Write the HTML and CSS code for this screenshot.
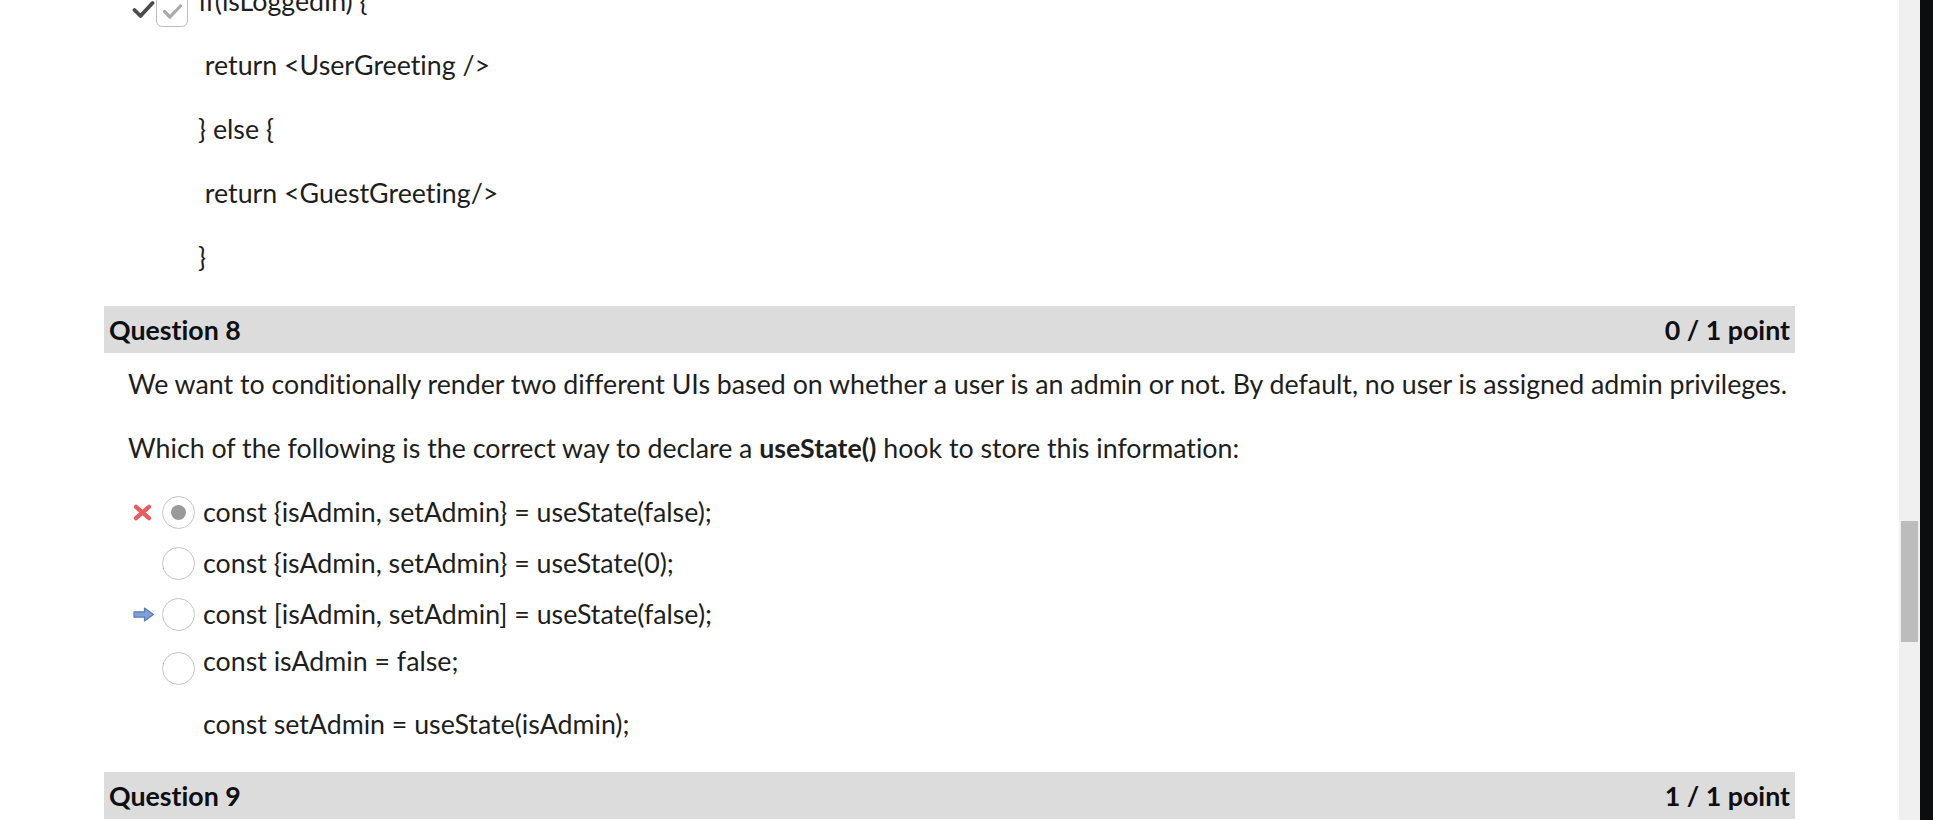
FILE: index.html
```html
<!DOCTYPE html>
<html>
<head>
<meta charset="utf-8">
<link rel="stylesheet" href="styles.css">
</head>
<body>
<div class="screen">
  <main class="main">
    <section class="prev">
      <div class="code-first">
        <div class="marks">
          <svg class="check-dark" width="23" height="19" viewBox="0 0 23 19"><path d="M2.5 10 L8.5 16 L20.5 3" fill="none" stroke="#4b4b4b" stroke-width="3.8" stroke-linecap="round" stroke-linejoin="round"/></svg>
          <span class="checkbox"><svg width="21" height="17" viewBox="0 0 21 17"><path d="M2.5 8.5 L8 14 L18.5 3" fill="none" stroke="#a9a9a9" stroke-width="3.2" stroke-linecap="round" stroke-linejoin="round"/></svg></span>
        </div>
        <p class="code">if(isLoggedIn) {</p>
      </div>
      <p class="code indent">&nbsp;return &lt;UserGreeting /&gt;</p>
      <p class="code indent">} else {</p>
      <p class="code indent">&nbsp;return &lt;GuestGreeting/&gt;</p>
      <p class="code indent last">}</p>
    </section>

    <section class="question">
      <header class="q-head"><span>Question 8</span><span>0 / 1 point</span></header>
      <div class="q-body">
        <p class="para">We want to conditionally render two different UIs based on whether a user is an admin or not. By default, no user is assigned admin privileges.</p>
        <p class="para">Which of the following is the correct way to declare a <strong>useState()</strong> hook to store this information:</p>
        <div class="options">
          <div class="opt">
            <span class="mark"><svg width="19" height="17" viewBox="0 0 19 17"><path d="M3 2.8 L16 14.2 M16 2.8 L3 14.2" stroke="#ec5a5e" stroke-width="4.2" stroke-linecap="round"/></svg></span>
            <span class="radio checked"></span>
            <div class="label"><p>const {isAdmin, setAdmin} = useState(false);</p></div>
          </div>
          <div class="opt">
            <span class="mark"></span>
            <span class="radio"></span>
            <div class="label"><p>const {isAdmin, setAdmin} = useState(0);</p></div>
          </div>
          <div class="opt">
            <span class="mark"><svg width="22" height="15" viewBox="0 0 22 15"><path d="M1 4.8 H11.5 V1 L20.5 7.5 L11.5 14 V10.2 H1 Z" fill="#7ea0d6" stroke="#5a7db8" stroke-width="1.2" stroke-linejoin="round"/></svg></span>
            <span class="radio"></span>
            <div class="label"><p>const [isAdmin, setAdmin] = useState(false);</p></div>
          </div>
          <div class="opt tight">
            <span class="mark"></span>
            <span class="radio lower"></span>
            <div class="label"><p>const isAdmin = false;</p><p>const setAdmin = useState(isAdmin);</p></div>
          </div>
        </div>
      </div>
    </section>

    <section class="question">
      <header class="q-head"><span>Question 9</span><span>1 / 1 point</span></header>
    </section>
  </main>
  <div class="scrollbar"><div class="thumb"></div></div>
  <div class="edge"></div>
</div>
</body>
</html>
```

FILE: styles.css
```css
html, body {
  margin: 0;
  padding: 0;
  background: #ffffff;
}

body {
  font-family: Lato, "Open Sans", "Liberation Sans", sans-serif;
  color: #1d1e20;
  font-size: 26.75px;
  line-height: 34px;
  font-variant-ligatures: none;
}

.screen {
  display: flex;
  height: 820px;
  overflow: hidden;
}

.main {
  flex: 1;
  padding-left: 104px;
  padding-right: 104px;
  overflow: hidden;
}

.prev {
  margin-top: -16px;
}

.code-first {
  display: flex;
  align-items: flex-start;
}

.marks {
  display: flex;
  align-items: flex-start;
  width: 95px;
  padding-left: 28px;
  box-sizing: border-box;
  margin-top: 15px;
}

.check-dark {
  margin-top: 1px;
}

.checkbox {
  width: 32px;
  height: 32px;
  border: 1px solid #bdbdbd;
  border-radius: 6px;
  box-sizing: border-box;
  margin-left: 1px;
  margin-top: -4px;
  display: flex;
  align-items: center;
  justify-content: center;
  background: #fff;
}

.code {
  margin: 0 0 30px;
}

.indent {
  padding-left: 94px;
}

.code.last {
  margin-bottom: 32px;
}

.q-head {
  display: flex;
  justify-content: space-between;
  align-items: center;
  background: #dcdcdc;
  height: 47px;
  padding: 0 5px;
  font-weight: 700;
  color: #0e0f10;
}

.q-body {
  padding: 14px 0 0 24px;
}

.para {
  margin: 0 0 30px;
}

.options {
  display: flex;
  flex-direction: column;
  gap: 17px;
  margin-top: 1px;
}

.opt {
  display: flex;
  align-items: flex-start;
}

.opt.tight {
  margin-top: -4px;
}

.mark {
  width: 34px;
  height: 34px;
  display: flex;
  align-items: center;
  padding-left: 5px;
  box-sizing: border-box;
  flex: none;
}

.radio {
  width: 33px;
  height: 33px;
  border: 1px solid #c4c4c4;
  border-radius: 50%;
  box-sizing: border-box;
  margin-top: 1px;
  margin-right: 8px;
  display: flex;
  align-items: center;
  justify-content: center;
  background: #fff;
  flex: none;
}

.radio.checked::after {
  content: "";
  width: 15px;
  height: 15px;
  border-radius: 50%;
  background: #9a9a9a;
}

.radio.lower {
  margin-top: 8px;
}

.label p {
  margin: 0;
}

.label p + p {
  margin-top: 29px;
}

.question + .question {
  margin-top: 31px;
}

.scrollbar {
  width: 21px;
  background: #f0f0f0;
  flex: none;
}

.thumb {
  margin: 521px 2px 0;
  height: 121px;
  background: #bcbcbc;
}

.edge {
  width: 13px;
  background: #0c0d10;
  flex: none;
}
```
